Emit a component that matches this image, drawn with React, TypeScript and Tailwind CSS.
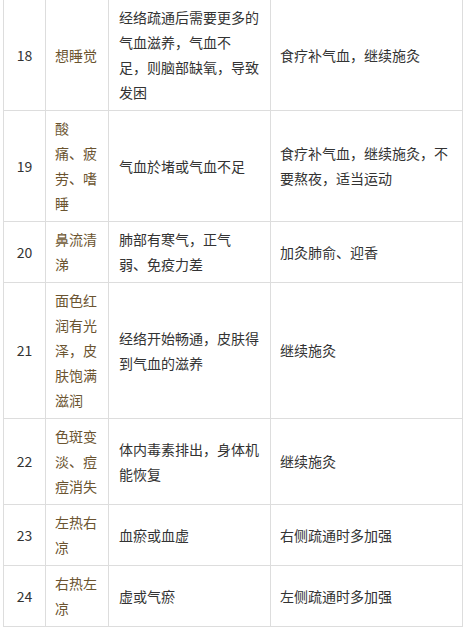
import React from "react";

type Row = {
  no: number;
  symptom: string[];
  reason: string[];
  advice: string[];
};

// lines are split the same way as the original table wraps them
const rows: Row[] = [
  {
    no: 18,
    symptom: ["想睡觉"],
    reason: ["经络疏通后需要更多的", "气血滋养，气血不", "足，则脑部缺氧，导致", "发困"],
    advice: ["食疗补气血，继续施灸"],
  },
  {
    no: 19,
    symptom: ["酸", "痛、疲", "劳、嗜", "睡"],
    reason: ["气血於堵或气血不足"],
    advice: ["食疗补气血，继续施灸，不", "要熬夜，适当运动"],
  },
  {
    no: 20,
    symptom: ["鼻流清", "涕"],
    reason: ["肺部有寒气，正气", "弱、免疫力差"],
    advice: ["加灸肺俞、迎香"],
  },
  {
    no: 21,
    symptom: ["面色红", "润有光", "泽，皮", "肤饱满", "滋润"],
    reason: ["经络开始畅通，皮肤得", "到气血的滋养"],
    advice: ["继续施灸"],
  },
  {
    no: 22,
    symptom: ["色斑变", "淡、痘", "痘消失"],
    reason: ["体内毒素排出，身体机", "能恢复"],
    advice: ["继续施灸"],
  },
  {
    no: 23,
    symptom: ["左热右", "凉"],
    reason: ["血瘀或血虚"],
    advice: ["右侧疏通时多加强"],
  },
  {
    no: 24,
    symptom: ["右热左", "凉"],
    reason: ["虚或气瘀"],
    advice: ["左侧疏通时多加强"],
  },
];

const Lines = ({ lines }: { lines: string[] }) => (
  <>
    {lines.map((line, i) => (
      <React.Fragment key={i}>
        {i > 0 && <br />}
        {line}
      </React.Fragment>
    ))}
  </>
);

const cell = "border border-[#dddddd] py-[5px] align-middle whitespace-nowrap";

const App = () => {
  return (
    <div className="min-h-screen bg-white pl-[3px] overflow-hidden">
      <table
        className="-mt-px table-fixed border-collapse w-[459px] text-[14px] leading-[25px] text-[#333333]"
        style={{ fontFamily: '"Noto Sans CJK SC", "Noto Sans", sans-serif' }}
      >
        <colgroup>
          <col className="w-[42px]" />
          <col className="w-[63px]" />
          <col className="w-[162px]" />
          <col className="w-[192px]" />
        </colgroup>
        <tbody>
          {rows.map((row) => (
            <tr key={row.no}>
              <td className={`${cell} text-center`}>{row.no}</td>
              <td className={`${cell} pl-[9px] pr-0 text-[#6b5430]`}>
                <Lines lines={row.symptom} />
              </td>
              <td className={`${cell} pl-[10px] pr-0`}>
                <Lines lines={row.reason} />
              </td>
              <td className={`${cell} pl-[9px] pr-0`}>
                <Lines lines={row.advice} />
              </td>
            </tr>
          ))}
        </tbody>
      </table>
    </div>
  );
};

export default App;
